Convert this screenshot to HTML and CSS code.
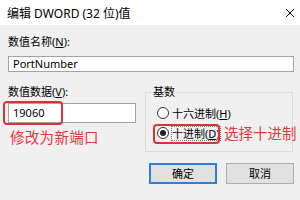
FILE: index.html
```html
<!DOCTYPE html>
<html lang="zh-CN">
<head>
<meta charset="utf-8" />
<title>编辑 DWORD (32 位)值</title>
<link rel="stylesheet" href="styles.css">
</head>
<body>
<div class="dialog">
	<div class="titlebar">
		<span class="title">编辑 DWORD (32 位)值</span>
		<svg class="close" width="10" height="10" viewBox="0 0 10 10"><path d="M1 1L9 9M9 1L1 9" stroke="#111" stroke-width="1" fill="none"/></svg>
	</div>
	<div class="client">
		<div class="label">数值名称(<u>N</u>):</div>
		<div class="textbox name">PortNumber</div>
		<div class="lower">
			<div class="datacol">
				<div class="label">数值数据(<u>V</u>):</div>
				<div class="textbox data">19060<span class="mark markdata"></span></div>
				<div class="note">修改为新端口</div>
			</div>
			<fieldset class="base">
				<legend>基数</legend>
				<div class="option"><span class="radio"></span><span>十六进制(<u>H</u>)</span></div>
				<div class="option"><span class="radio checked"></span><span class="dotted">十进制(<u>D</u>)</span><span class="mark markradio"></span><span class="sidenote">选择十进制</span></div>
			</fieldset>
		</div>
		<div class="buttons">
			<div class="btn default">确定</div>
			<div class="btn">取消</div>
		</div>
	</div>
</div>
</body>
</html>
```

FILE: styles.css
```css
html, body {
	margin: 0;
	padding: 0;
}
body {
	width: 300px;
	height: 200px;
	overflow: hidden;
	font-family: "Noto Sans", "Noto Sans CJK SC", sans-serif;
	font-size: 11px;
	color: #000;
}
div.dialog {
	width: 300px;
	height: 200px;
	background-color: #f0f0f0;
}
div.titlebar {
	height: 25px;
	background-color: #fff;
	display: flex;
	align-items: center;
	justify-content: space-between;
	padding: 0 5px 0 7px;
}
span.title {
	font-size: 12px;
}
div.client {
	padding: 9px 6px 0 8px;
}
div.label {
	line-height: 16px;
	height: 16px;
}
div.textbox {
	background-color: #fff;
	border: 1px solid #a3a3a3;
	box-sizing: border-box;
	padding-left: 4px;
	position: relative;
}
div.name {
	margin-top: 6px;
	height: 16px;
	line-height: 14px;
}
div.data {
	margin-top: 3px;
	height: 20px;
	line-height: 18px;
}
div.lower {
	display: grid;
	grid-template-columns: 128px 148px;
	column-gap: 9px;
	margin-top: 12px;
}
div.note {
	color: #e2383c;
	font-size: 14.5px;
	line-height: 18px;
	margin-top: 5px;
	margin-left: 2px;
	letter-spacing: 0.3px;
}
fieldset.base {
	margin: 0;
	border: 1px solid #dcdcdc;
	padding: 0 0 8px 6px;
	min-width: 0;
}
fieldset.base legend {
	padding: 0 1px;
	line-height: 16px;
}
div.option {
	display: flex;
	align-items: center;
	height: 20px;
	padding-left: 5px;
	position: relative;
	white-space: nowrap;
}
div.option:first-of-type {
	margin-top: 3px;
}
span.radio {
	flex: none;
	width: 10px;
	height: 10px;
	border: 1px solid #333;
	border-radius: 50%;
	margin-right: 3px;
	position: relative;
	background-color: #fff;
}
span.radio.checked::after {
	content: "";
	position: absolute;
	left: 2px;
	top: 2px;
	width: 6px;
	height: 6px;
	border-radius: 50%;
	background-color: #222;
}
span.dotted {
	outline: 1px dotted #777;
	line-height: 13px;
}
span.mark {
	position: absolute;
	box-sizing: border-box;
	border: 2px solid #d8353b;
	border-radius: 4px;
}
span.markdata {
	left: -6px;
	top: -3px;
	width: 60px;
	height: 24px;
}
span.markradio {
	left: 1px;
	top: 1px;
	width: 67px;
	height: 20px;
}
span.sidenote {
	position: absolute;
	left: 72px;
	top: 0;
	line-height: 20px;
	color: #e2383c;
	font-size: 14.5px;
}
div.buttons {
	display: flex;
	justify-content: flex-end;
	gap: 9px;
	margin-top: 11px;
}
div.btn {
	width: 68px;
	height: 21px;
	box-sizing: border-box;
	border: 1px solid #adadad;
	background-color: #e1e1e1;
	text-align: center;
	line-height: 19px;
}
div.btn.default {
	border: 2px solid #2f7fd3;
	line-height: 17px;
}
```
